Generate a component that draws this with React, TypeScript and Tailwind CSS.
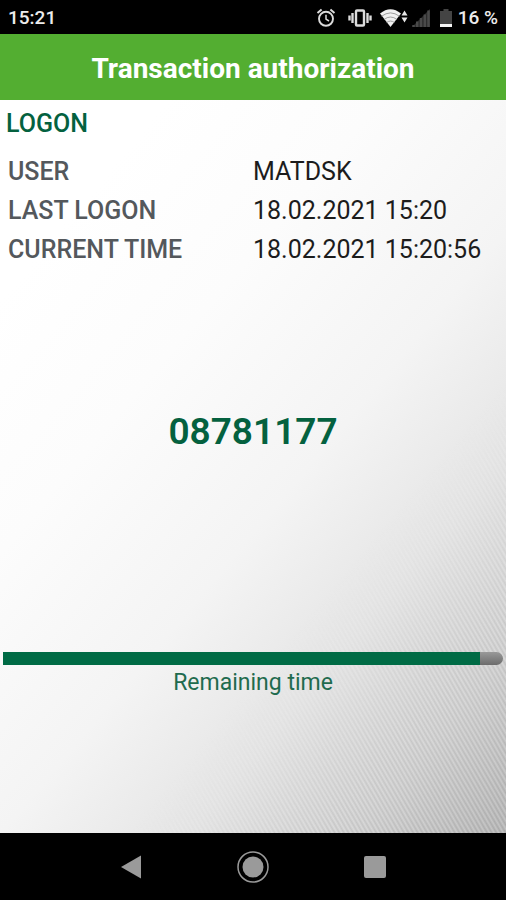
import React from 'react';

interface InfoRow {
  label: string;
  value: string;
}

const rows: InfoRow[] = [
  { label: 'USER', value: 'MATDSK' },
  { label: 'LAST LOGON', value: '18.02.2021 15:20' },
  { label: 'CURRENT TIME', value: '18.02.2021 15:20:56' },
];

const StatusBar: React.FC = () => (
  <div className="flex h-[34px] items-center justify-between bg-black px-2 pt-0.5 text-[19px] font-medium text-[#ececec]">
    <span>15:21</span>
    <div className="flex items-center">
      {/* Alarm */}
      <svg className="mr-3 h-5 w-5" viewBox="0 0 20 20" fill="none" stroke="#dcdcdc">
        <circle cx="10" cy="10.8" r="7" strokeWidth="1.9" />
        <path d="M10 6.8V11.2l3 1.8" strokeWidth="1.5" />
        <path d="M1.5 5 5.6 1.6M18.5 5 14.4 1.6" strokeWidth="2" />
      </svg>
      {/* Vibrate */}
      <svg className="mr-2 h-5 w-6" viewBox="0 0 24 20" fill="none" stroke="#dcdcdc">
        <rect x="8" y="2.5" width="8" height="15" rx="1" strokeWidth="2.4" />
        <path d="M4.5 5v10M19.5 5v10M1.5 7.5v5M22.5 7.5v5" strokeWidth="2.4" />
      </svg>
      {/* Wifi */}
      <svg className="mr-1 h-5 w-7" viewBox="0 0 28 20">
        <path d="M0 5.5Q10.5-3 21 5.5L10.5 19Z" fill="#f0f0f0" />
        <path
          d="M1.5 8.3Q10.5 1.5 19.5 8.3M4 11.5Q10.5 6.5 17 11.5M6.5 14.6Q10.5 11.5 14.5 14.6"
          fill="none"
          stroke="#888"
          strokeWidth="0.8"
        />
        <path d="M24.5 2.5 27.5 7.5h-6ZM24.5 14.5 21.5 9.5h6Z" fill="#e6e6e6" />
      </svg>
      {/* Mobile signal */}
      <svg className="mr-2.5 h-5 w-[18px]" viewBox="0 0 18 20">
        <path d="M0 19 18 1v18Z" fill="#2c2c2c" />
        <path d="M1.5 19v-2M5.2 19v-5.5M9 19v-9M12.8 19V6.5M16.5 19V2.5" stroke="#4a4a4a" strokeWidth="2.4" />
      </svg>
      {/* Battery */}
      <svg className="mr-1.5 h-5 w-3" viewBox="0 0 12 20">
        <path d="M3.5 1h5v2H12v16H0V3h3.5Z" fill="#444" />
        <path d="M0 16h12v3H0Z" fill="#f5f5f5" />
      </svg>
      <span>16 %</span>
    </div>
  </div>
);

const NavBar: React.FC = () => (
  <nav className="flex h-[67px] items-center justify-center gap-[90px] bg-black">
    <button aria-label="Back" className="flex h-8 w-8 items-center justify-center">
      <svg className="h-6 w-5" viewBox="0 0 20 24" fill="#9a9a9a">
        <path d="M0 12 20 .5v23Z" />
      </svg>
    </button>
    <button aria-label="Home" className="flex h-8 w-8 items-center justify-center">
      <svg className="h-8 w-8" viewBox="0 0 32 32">
        <circle cx="16" cy="16" r="15" fill="none" stroke="#9a9a9a" strokeWidth="1.5" />
        <circle cx="16" cy="16" r="10.5" fill="#9a9a9a" />
      </svg>
    </button>
    <button aria-label="Recent apps" className="flex h-8 w-8 items-center justify-center">
      <span className="h-[22px] w-[22px] rounded-[2px] bg-[#9a9a9a]" />
    </button>
  </nav>
);

const App: React.FC = () => {
  const elapsed = 95.4;

  return (
    <div className="flex min-h-screen flex-col font-['Roboto',sans-serif]">
      <StatusBar />

      <header className="flex h-[66px] items-center justify-center bg-[#53ae31]">
        <h1 className="pt-1 text-[28px] font-bold text-white">Transaction authorization</h1>
      </header>

      <main className="relative isolate flex flex-1 flex-col bg-[linear-gradient(130deg,#ffffff_15%,#fcfcfc_34%,#f4f4f4_55%,#e5e5e5_72%,#cecece_87%,#b2b2b2_100%)]">
        {/* Diagonal texture, fading in towards the bottom right */}
        <div className="absolute inset-0 -z-10 bg-[repeating-linear-gradient(60deg,#ffffff38_0px,#0000000c_2px,#ffffff38_4px)] [mask-image:linear-gradient(130deg,transparent_66%,black_84%)]" />

        <h2 className="px-1.5 pt-2 text-[25px] leading-8 font-medium text-[#04613f]">LOGON</h2>

        <table className="mt-3 w-full text-left text-[25px] leading-[39px]">
          <tbody>
            {rows.map((row) => (
              <tr key={row.label}>
                <th scope="row" className="w-1/2 pl-2 font-medium text-[#54585c]">
                  {row.label}
                </th>
                <td className="text-[#1c1c1c]">{row.value}</td>
              </tr>
            ))}
          </tbody>
        </table>

        <p className="mt-[139px] text-center text-[37px] leading-[48px] font-semibold text-[#04613f]">08781177</p>

        <div className="mt-auto px-[3px] pb-[134px]">
          <div
            role="progressbar"
            aria-labelledby="remaining"
            aria-valuenow={elapsed}
            className="h-[13px] overflow-hidden rounded-r-full bg-linear-to-b from-[#999999] to-[#6c6c6c]"
          >
            <div className="h-full bg-[#006b45]" style={{ width: `${elapsed}%` }} />
          </div>
          <p id="remaining" className="pt-0.5 text-center text-[23px] leading-8 text-[#1f6b4e]">
            Remaining time
          </p>
        </div>
      </main>

      <NavBar />
    </div>
  );
};

export default App;
